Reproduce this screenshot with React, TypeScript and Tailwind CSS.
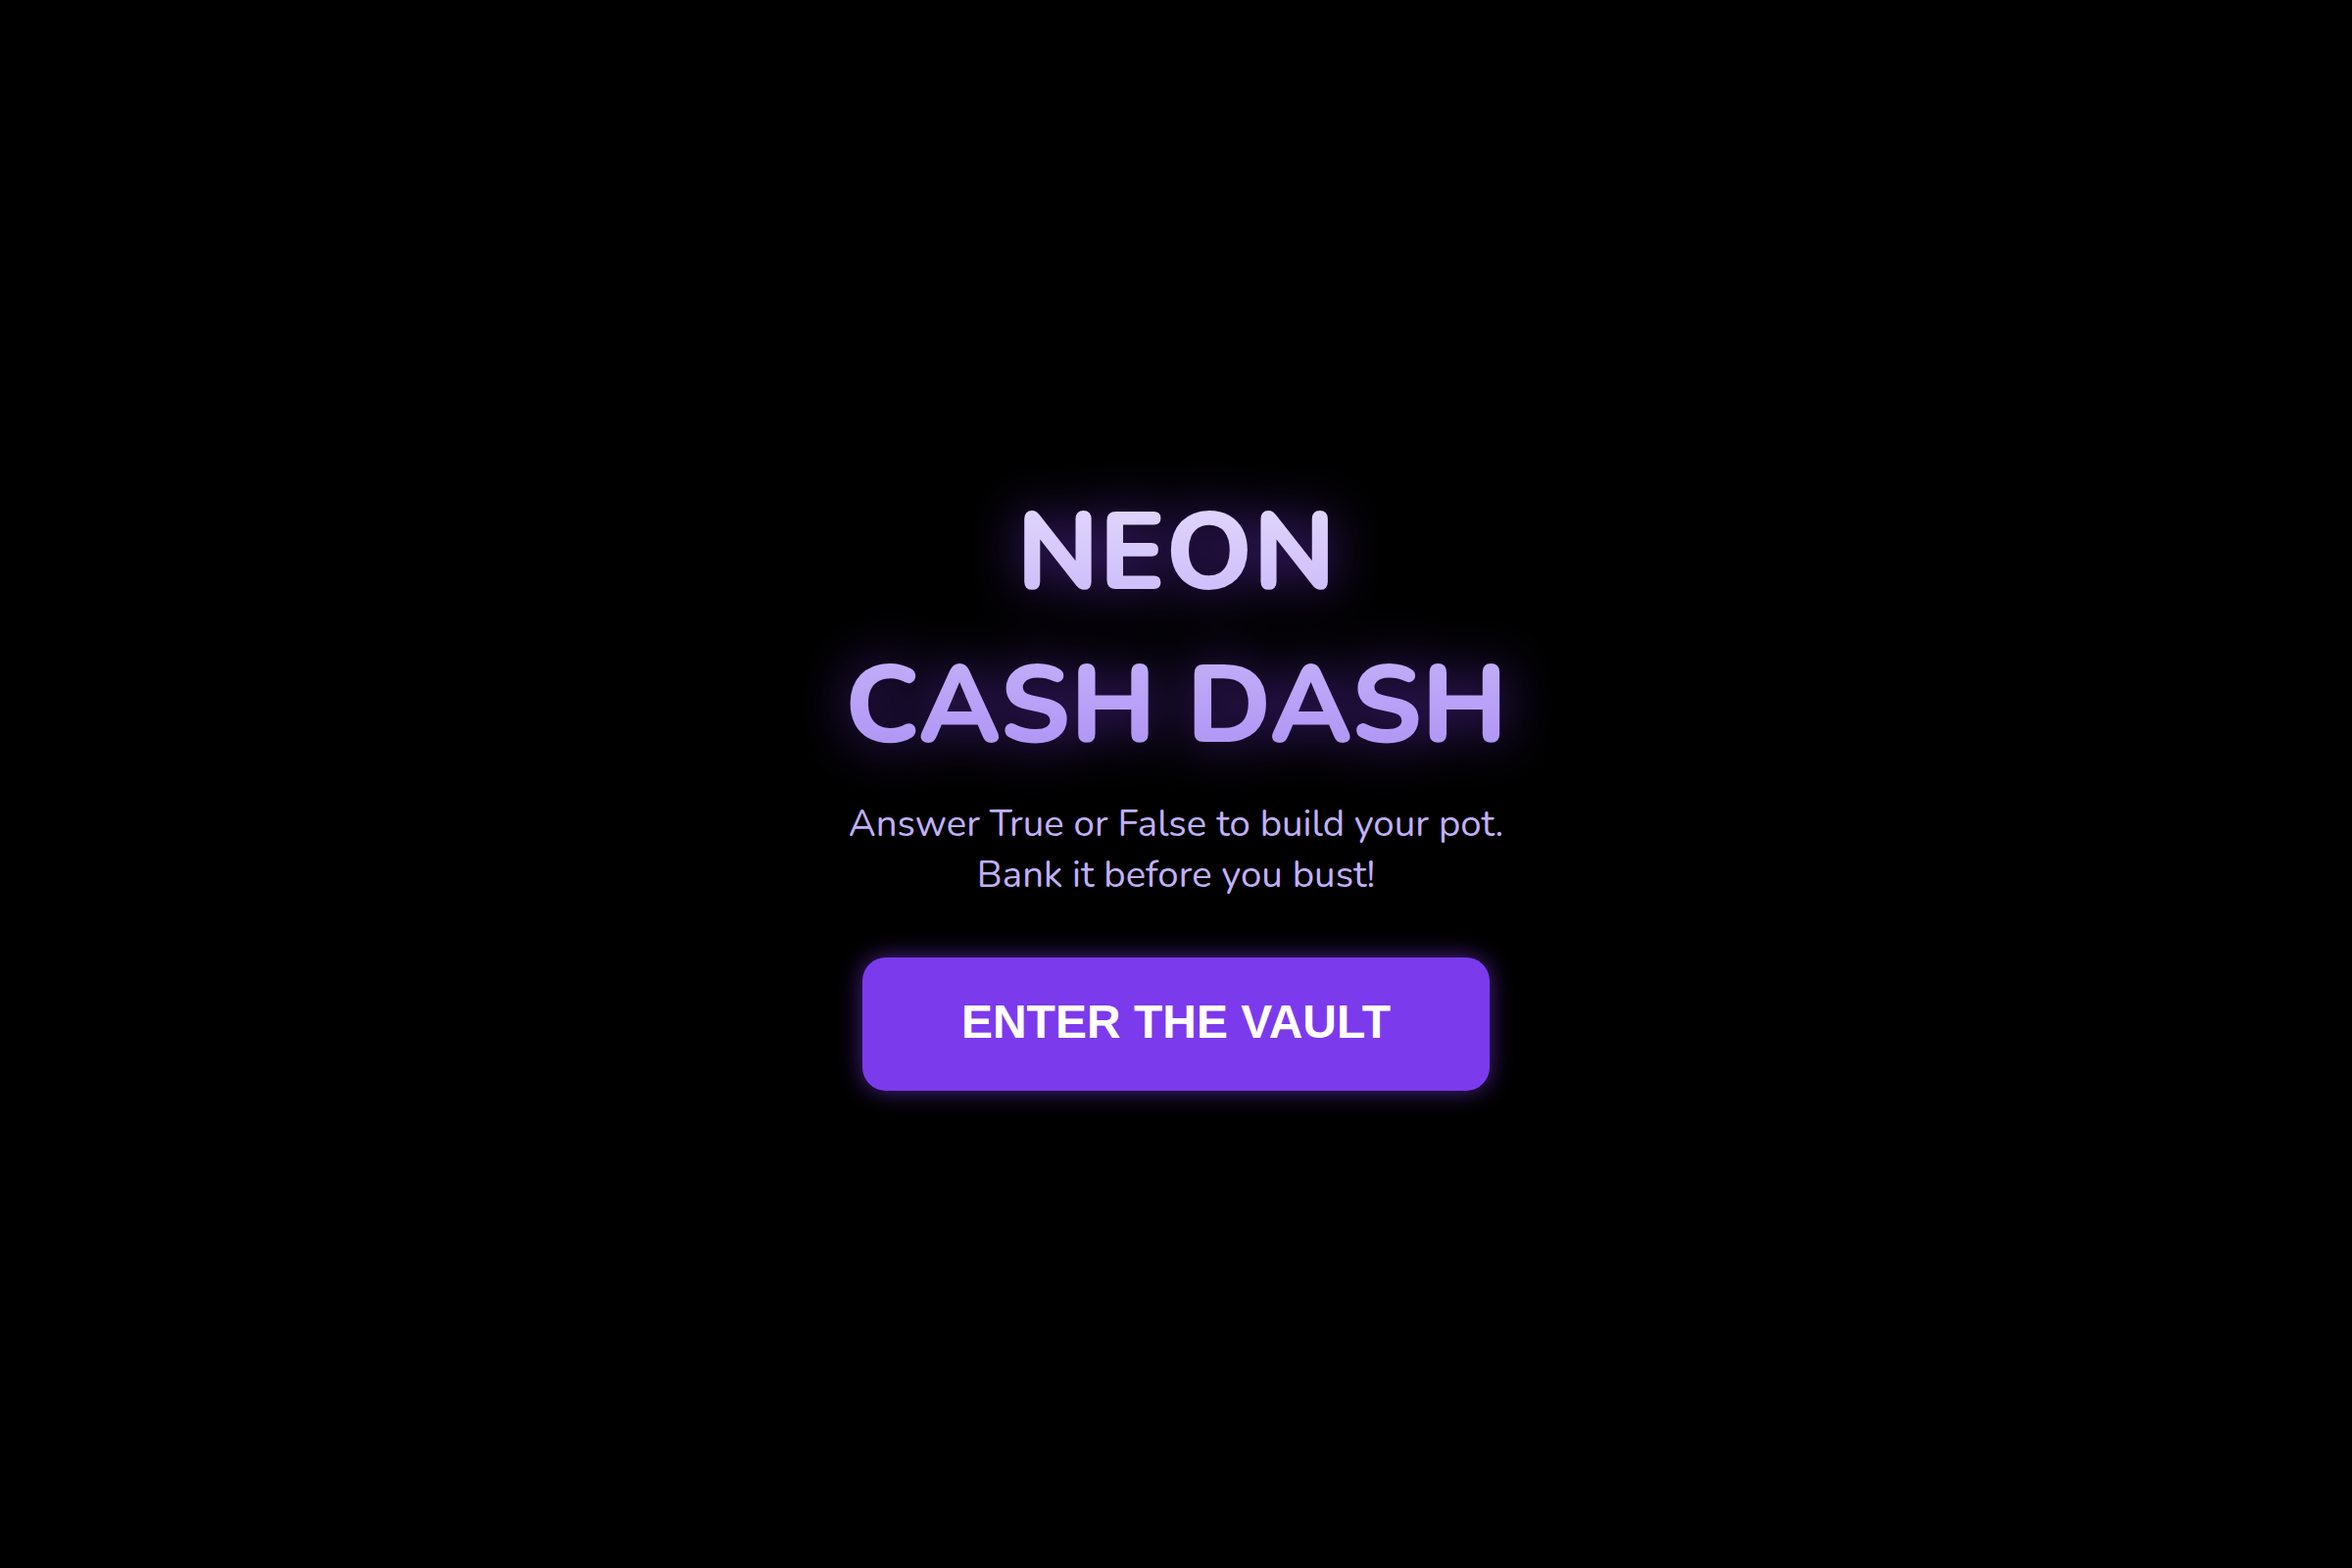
export default function App() {
  return (
    <div className="flex min-h-screen w-full items-center justify-center bg-black">
      <div className="flex flex-col items-center text-center">
        {/* title */}
        <h1 className="bg-gradient-to-b from-[#e6dcfd] to-[#a98cf3] bg-clip-text font-['Nunito','Noto_Sans',sans-serif] text-[112px] leading-[156px] font-extrabold text-transparent drop-shadow-[0_0_26px_rgba(124,58,237,0.6)]">
          NEON
          <br />
          CASH DASH
        </h1>

        {/* tagline */}
        <p className="mt-[16px] font-['Nunito','Noto_Sans',sans-serif] text-[38.4px] leading-[52px] text-[#c1b0f7]">
          Answer True or False to build your pot.
          <br />
          Bank it before you bust!
        </p>

        {/* start */}
        <button className="mt-[58px] h-[136px] w-[640px] rounded-[24px] bg-[#7c3aed] pb-[4px] font-['Liberation_Sans',Arial,sans-serif] text-[48px] font-bold text-white shadow-[0_0_24px_rgba(124,58,237,0.6)]">
          ENTER THE VAULT
        </button>
      </div>
    </div>
  )
}
